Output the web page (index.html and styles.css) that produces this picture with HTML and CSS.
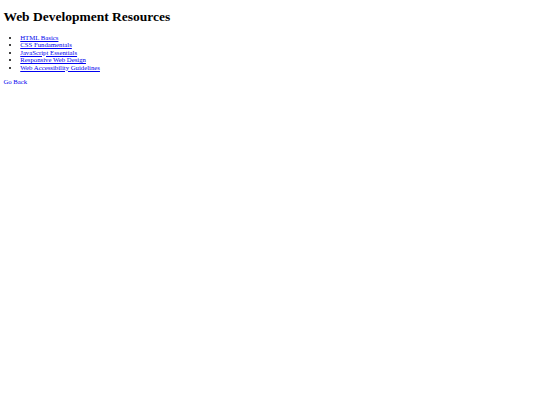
FILE: index.html
```html
<!DOCTYPE html>
<html lang="en">
<head>
<meta charset="utf-8">
<title>Web Development Resources</title>
<link rel="stylesheet" href="styles.css">
</head>
<body>
<h1 class="title">Web Development Resources</h1>
<ul class="resources">
  <li><a href="#">HTML Basics</a></li>
  <li><a href="#">CSS Fundamentals</a></li>
  <li><a href="#">JavaScript Essentials</a></li>
  <li><a href="#">Responsive Web Design</a></li>
  <li><a href="#">Web Accessibility Guidelines</a></li>
</ul>
<a class="back" href="#">Go Back</a>
</body>
</html>
```
FILE: styles.css
```css
html {
  background: #ffffff;
}
body {
  margin: 3.375px;
  font-family: "Liberation Serif", "Times New Roman", serif;
  font-size: 6.75px;
  line-height: 1.107;
  color: #000000;
}
.title {
  font-size: 13.5px;
  font-weight: bold;
  margin: 6.5px 0 9.045px;
}
.resources {
  margin: 6.75px 0;
  padding-left: 16.875px;
}
a {
  color: #0000ee;
  text-decoration: underline;
}
```
